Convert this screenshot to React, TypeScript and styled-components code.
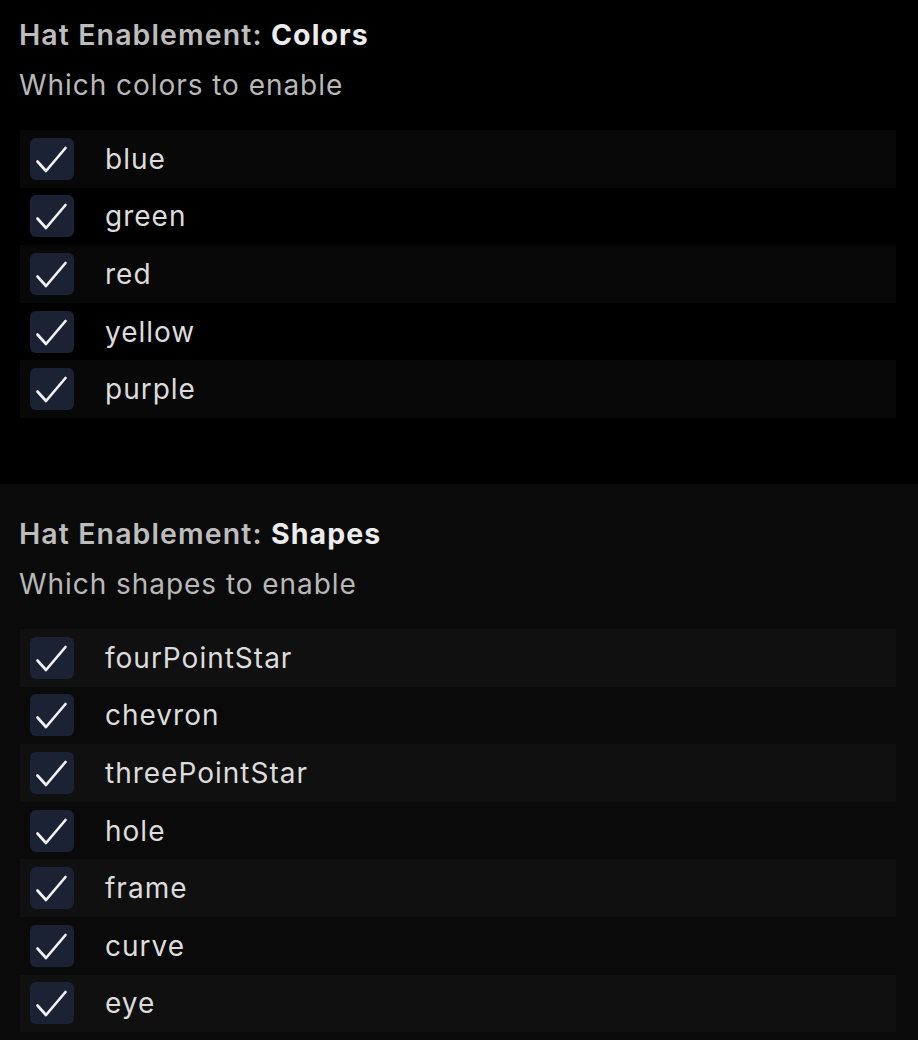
import React from "react";
import styled, { createGlobalStyle } from "styled-components";

const Global = createGlobalStyle`
  html, body { margin: 0; padding: 0; background: #000; }
  body { font-family: Inter, "Noto Sans", "Liberation Sans", sans-serif; -webkit-font-smoothing: antialiased; }
`;

const Page = styled.div`
  display: flex;
  flex-direction: column;
  min-height: 1040px;
  background: #0a0a0a;
`;

const Section = styled.section<{ $alt?: boolean; $first?: boolean }>`
  display: flex;
  flex-direction: column;
  background: ${(p) => (p.$alt ? "#0a0a0a" : "#000")};
  padding: ${(p) => (p.$first ? "18px" : "33px")} 22px ${(p) => (p.$first ? "66px" : "8px")} 20px;
`;

const Title = styled.h2`
  margin: 0 0 0 -1px;
  font-size: 28.5px;
  line-height: 34px;
  font-weight: 600;
  color: #bdbdbd;
  letter-spacing: 1.1px;
`;

const Strong = styled.span`
  color: #ececec;
  font-weight: 700;
`;

const Subtitle = styled.p`
  margin: 16px 0 0 -1px;
  font-size: 28px;
  line-height: 34px;
  font-weight: 400;
  color: #b8b8b8;
  letter-spacing: 0.95px;
`;

const List = styled.div`
  display: flex;
  flex-direction: column;
  margin-top: 28px;
`;

const Row = styled.label<{ $shade: string }>`
  display: flex;
  align-items: center;
  height: 57.6px;
  padding-left: 10px;
  background: ${(p) => p.$shade};
  cursor: pointer;
`;

const Box = styled.span`
  display: flex;
  align-items: center;
  justify-content: center;
  width: 44px;
  height: 42px;
  border-radius: 6px;
  background: #1b2233;
  flex-shrink: 0;
`;

const Label = styled.span`
  margin-left: 31px;
  font-size: 28px;
  line-height: 34px;
  color: #dcdcdc;
  letter-spacing: 1px;
`;

const Check = () => (
  <svg width="44" height="42" viewBox="0 0 44 42" fill="none">
    <path d="M7.5 23.5 L16 33 L35.5 10" stroke="#f2f2f2" strokeWidth="2.7" strokeLinecap="round" strokeLinejoin="round" />
  </svg>
);

type Group = { heading: string; bold: string; sub: string; items: string[] };

const groups: Group[] = [
  { heading: "Hat Enablement: ", bold: "Colors", sub: "Which colors to enable", items: ["blue", "green", "red", "yellow", "purple"] },
  {
    heading: "Hat Enablement: ",
    bold: "Shapes",
    sub: "Which shapes to enable",
    items: ["fourPointStar", "chevron", "threePointStar", "hole", "frame", "curve", "eye"],
  },
];

export default function App() {
  return (
    <>
      <Global />
      <Page>
        {groups.map((g, gi) => {
          const alt = gi % 2 === 1;
          const light = alt ? "#101010" : "#080808";
          const dark = alt ? "#0a0a0a" : "#000";
          return (
            <Section key={g.bold} $alt={alt} $first={gi === 0}>
              <Title>
                {g.heading}
                <Strong>{g.bold}</Strong>
              </Title>
              <Subtitle>{g.sub}</Subtitle>
              <List>
                {g.items.map((it, i) => (
                  <Row key={it} $shade={i % 2 === 0 ? light : dark}>
                    <Box>
                      <Check />
                    </Box>
                    <Label>{it}</Label>
                  </Row>
                ))}
              </List>
            </Section>
          );
        })}
      </Page>
    </>
  );
}
